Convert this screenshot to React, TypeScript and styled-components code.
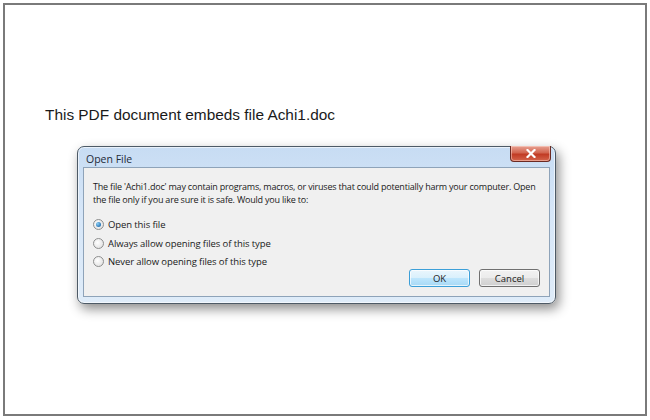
import React from "react";
import styled, { createGlobalStyle } from "styled-components";

const GlobalStyle = createGlobalStyle`
  html, body {
    margin: 0;
    padding: 0;
    background: #ffffff;
  }
`;

const Page = styled.div`
  width: 650px;
  height: 420px;
  padding: 3px;
  box-sizing: border-box;
`;

const Frame = styled.div`
  width: 644px;
  height: 413px;
  box-sizing: border-box;
  border: 2px solid #7a7a7a;
  background: #ffffff;
  padding: 100px 0 0 40px;
`;

const Heading = styled.div`
  font-family: "Liberation Sans", Arial, sans-serif;
  font-size: 15.4px;
  color: #1a1a1a;
  line-height: 20px;
`;

const Dialog = styled.div`
  margin: 21px 0 0 32px;
  width: 479px;
  height: 158px;
  box-sizing: border-box;
  border: 1px solid #4d5a66;
  border-radius: 7px;
  background: linear-gradient(180deg, #c7dcf3 0%, #d6e6f8 40%, #dfecf9 100%);
  box-shadow: 3px 5px 12px rgba(0, 0, 0, 0.45), inset 0 0 0 1px rgba(255, 255, 255, 0.6);
  display: flex;
  flex-direction: column;
  padding: 0 5px 6px 5px;
`;

const TitleBar = styled.div`
  height: 20px;
  display: flex;
  align-items: flex-start;
  justify-content: space-between;
`;

const Title = styled.div`
  font-family: "Open Sans", "Noto Sans", sans-serif;
  font-size: 10.5px;
  color: #1e2a38;
  padding: 5px 0 0 3px;
`;

const CloseButton = styled.div`
  width: 39px;
  height: 15px;
  margin-top: -1px;
  margin-right: -1px;
  border: 1px solid #6b2a23;
  border-top: none;
  border-radius: 0 0 4px 4px;
  background: linear-gradient(180deg, #e8a293 0%, #d2654f 45%, #c13b24 55%, #d5654c 100%);
  display: flex;
  align-items: center;
  justify-content: center;
  box-shadow: inset 0 0 0 1px rgba(255, 220, 210, 0.5);
`;

const Panel = styled.div`
  flex: 1;
  border: 1px solid #8ea3b9;
  background: #f0f0f0;
  padding: 12px 9px 9px 9px;
  display: flex;
  flex-direction: column;
  font-family: "Open Sans", "Noto Sans", sans-serif;
  font-size: 9.5px;
  color: #1a1a1a;
`;

const Message = styled.div`
  font-size: 9px;
  line-height: 13px;
  white-space: nowrap;
  letter-spacing: -0.2px;
`;

const Options = styled.div`
  margin-top: 12px;
  display: flex;
  flex-direction: column;
  gap: 5px;
`;

const OptionRow = styled.div`
  display: flex;
  align-items: center;
  gap: 4px;
  height: 13.5px;
  letter-spacing: -0.1px;
`;

const Radio = styled.span<{ $checked?: boolean }>`
  width: 11px;
  height: 11px;
  border-radius: 50%;
  box-sizing: border-box;
  border: 1px solid #8e8f8f;
  background: radial-gradient(circle at 40% 40%, #ffffff 0%, #e6e6e6 70%, #d6d6d6 100%);
  display: flex;
  align-items: center;
  justify-content: center;

  &::after {
    content: "";
    display: ${(p) => (p.$checked ? "block" : "none")};
    width: 5px;
    height: 5px;
    border-radius: 50%;
    background: radial-gradient(circle at 35% 35%, #8fd0f5 0%, #2a78b8 70%, #1f5a8c 100%);
  }
`;

const ButtonRow = styled.div`
  display: flex;
  justify-content: flex-end;
  gap: 9px;
  margin-top: auto;
`;

const Button = styled.div<{ $default?: boolean }>`
  width: 61px;
  height: 18px;
  box-sizing: border-box;
  border: 1px solid ${(p) => (p.$default ? "#3c9fd8" : "#707070")};
  border-radius: 3px;
  background: ${(p) =>
    p.$default
      ? "linear-gradient(180deg, #eaf6fd 0%, #d9f0fc 50%, #bee6fd 51%, #a7d9f5 100%)"
      : "linear-gradient(180deg, #f2f2f2 0%, #ebebeb 50%, #dddddd 51%, #cfcfcf 100%)"};
  box-shadow: inset 0 0 0 1px rgba(255, 255, 255, 0.7);
  display: flex;
  align-items: center;
  justify-content: center;
  font-size: 9.5px;
  color: #1a1a1a;
`;

const options = [
  { label: "Open this file", checked: true },
  { label: "Always allow opening files of this type", checked: false },
  { label: "Never allow opening files of this type", checked: false },
];

export default function App() {
  return (
    <>
      <GlobalStyle />
      <Page>
        <Frame>
          <Heading>This PDF document embeds file Achi1.doc</Heading>
          <Dialog>
            <TitleBar>
              <Title>Open File</Title>
              <CloseButton>
                <svg width="10" height="9" viewBox="0 0 10 9">
                  <path d="M1.5 1 L8.5 8 M8.5 1 L1.5 8" stroke="#ffffff" strokeWidth="2.2" strokeLinecap="square" />
                </svg>
              </CloseButton>
            </TitleBar>
            <Panel>
              <Message>
                The file 'Achi1.doc' may contain programs, macros, or viruses that could potentially harm your computer. Open
                <br />
                the file only if you are sure it is safe. Would you like to:
              </Message>
              <Options>
                {options.map((o) => (
                  <OptionRow key={o.label}>
                    <Radio $checked={o.checked} />
                    {o.label}
                  </OptionRow>
                ))}
              </Options>
              <ButtonRow>
                <Button $default>OK</Button>
                <Button>Cancel</Button>
              </ButtonRow>
            </Panel>
          </Dialog>
        </Frame>
      </Page>
    </>
  );
}
